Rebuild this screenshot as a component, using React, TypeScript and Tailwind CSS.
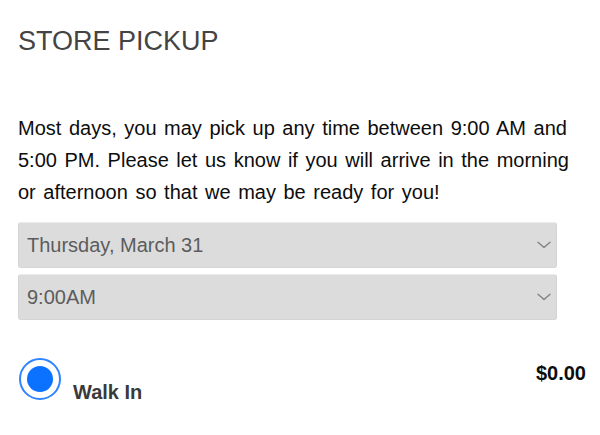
import React from "react";

function Chevron() {
  return (
    <svg width="14" height="8" viewBox="0 0 14 8" fill="none" className="shrink-0">
      <path d="M1 1.2 L7 6.6 L13 1.2" stroke="#808080" strokeWidth="1.3" strokeLinecap="round" strokeLinejoin="round" />
    </svg>
  );
}

function SelectBox({ value }: { value: string }) {
  return (
    <div className="flex h-[46px] items-center justify-between rounded-[3px] border border-[#d4d4d4] border-t-[#ebebeb] bg-[#dcdcdc] pl-[8px] pr-[5px] text-[20px] text-[#5c5c5c]">
      <span>{value}</span>
      <Chevron />
    </div>
  );
}

export default function App() {
  return (
    <div className="h-[435px] w-[600px] bg-white font-['Liberation_Sans',Arial,sans-serif]">
      <div className="pl-[18px] pr-[14px] pt-[25px]">
        <h2 className="text-[27px] leading-[32px] text-[#444444]">STORE PICKUP</h2>
        <p className="mt-[55px] pr-[12px] text-[20px] leading-[32px] text-[#0d0d0d] [word-spacing:2px]">
          Most days, you may pick up any time between 9:00 AM and 5:00 PM. Please let us know if you will arrive in the morning or afternoon so that we may be ready for you!
        </p>
        <div className="mt-[14px] mr-[29px] flex flex-col gap-[6px]">
          <SelectBox value="Thursday, March 31" />
          <SelectBox value="9:00AM" />
        </div>
        <div className="mt-[38px] flex items-start justify-between">
          <div className="flex items-start">
            <div className="ml-px flex h-[42px] w-[42px] items-center justify-center rounded-full border-[2px] border-[#2f84ff] bg-white">
              <div className="h-[26px] w-[26px] rounded-full bg-[#0a72ff]" />
            </div>
            <span className="ml-[12px] mt-[23px] text-[20px] leading-[23px] font-bold text-[#3a3a3a]">Walk In</span>
          </div>
          <span className="mt-[4px] text-[20px] leading-[23px] font-bold text-[#0d0d0d]">$0.00</span>
        </div>
      </div>
    </div>
  );
}
